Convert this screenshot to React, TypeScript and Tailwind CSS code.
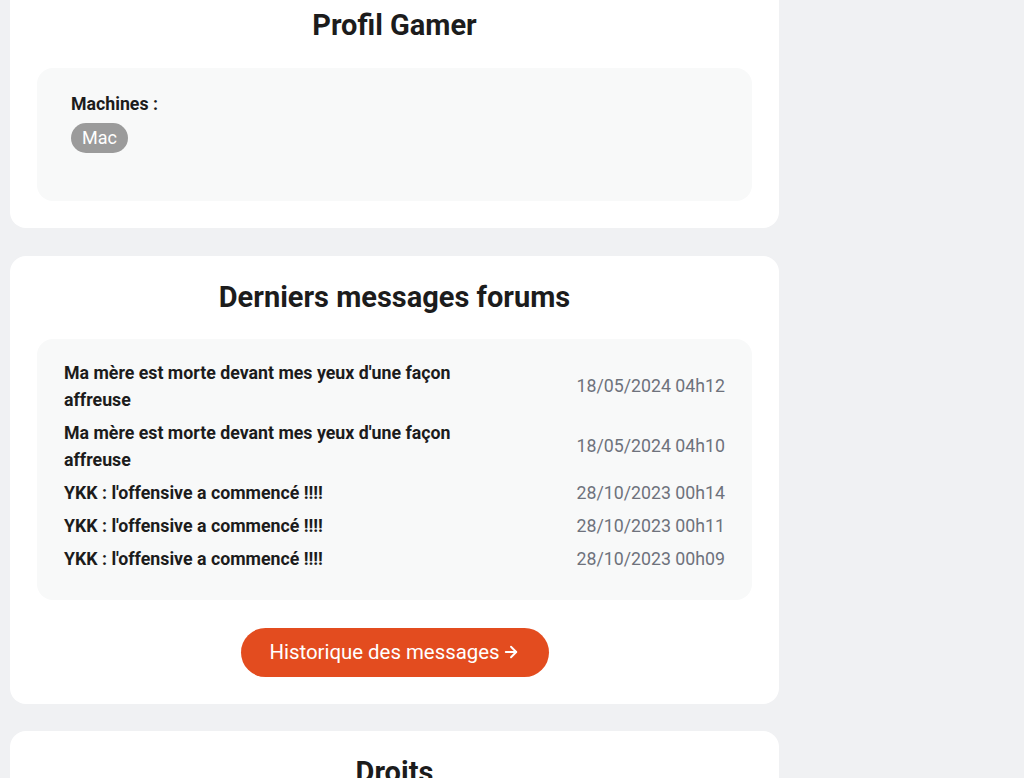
import { ArrowRight } from "lucide-react";

const messages = [
  {
    title: "Ma mère est morte devant mes yeux d'une façon affreuse",
    date: "18/05/2024 04h12",
  },
  {
    title: "Ma mère est morte devant mes yeux d'une façon affreuse",
    date: "18/05/2024 04h10",
  },
  { title: "YKK : l'offensive a commencé !!!!", date: "28/10/2023 00h14" },
  { title: "YKK : l'offensive a commencé !!!!", date: "28/10/2023 00h11" },
  { title: "YKK : l'offensive a commencé !!!!", date: "28/10/2023 00h09" },
];

const Card = ({ title, children }: any) => (
  <section className="w-[769px] rounded-2xl bg-white px-[27px] pt-[10px] pb-[27px]">
    <h2 className="h-[64px] mb-[10px] flex items-center justify-center text-[29px] font-bold text-[#1c1c1c]">
      {title}
    </h2>
    {children}
  </section>
);

export default function App() {
  return (
    <div
      className="h-[778px] overflow-hidden bg-[#f0f1f3] pl-[10px]"
      style={{ fontFamily: "Roboto, 'Noto Sans', sans-serif" }}
    >
      <div className="flex flex-col gap-[27.5px] -mt-[16px]">
        <Card title="Profil Gamer">
          <div className="rounded-2xl bg-[#f8f9f9] h-[133px] px-[34px] pt-[24px]">
            <div className="text-[17.75px] font-bold text-[#1c1c1c] leading-[24px]">Machines :</div>
            <div className="mt-[7px] flex">
              <span className="h-[30px] rounded-full bg-[#9b9b9b] px-[11px] text-[18px] leading-[30px] text-white">
                Mac
              </span>
            </div>
          </div>
        </Card>

        <Card title="Derniers messages forums">
          <div className="-mt-[1px] rounded-2xl bg-[#f8f9f9] px-[27px] pt-[21px] pb-[27px] flex flex-col gap-[6px]">
            {messages.map((m, i) => (
              <div key={i} className="flex items-center justify-between">
                <div className="w-[395px] text-[17.75px] font-bold leading-[27px] text-[#1c1c1c]">
                  {m.title}
                </div>
                <div className="text-[17.75px] leading-[27px] text-[#6e727c]">{m.date}</div>
              </div>
            ))}
          </div>
          <div className="mt-[28px] flex justify-center">
            <button className="h-[49px] w-[308px] rounded-full bg-[#e34c1f] text-[20.4px] text-white flex items-center justify-center gap-[2px]">
              Historique des messages
              <ArrowRight size={18} strokeWidth={2.5} />
            </button>
          </div>
        </Card>

        <Card title="Droits">
          <div className="h-[120px]" />
        </Card>
      </div>
    </div>
  );
}
